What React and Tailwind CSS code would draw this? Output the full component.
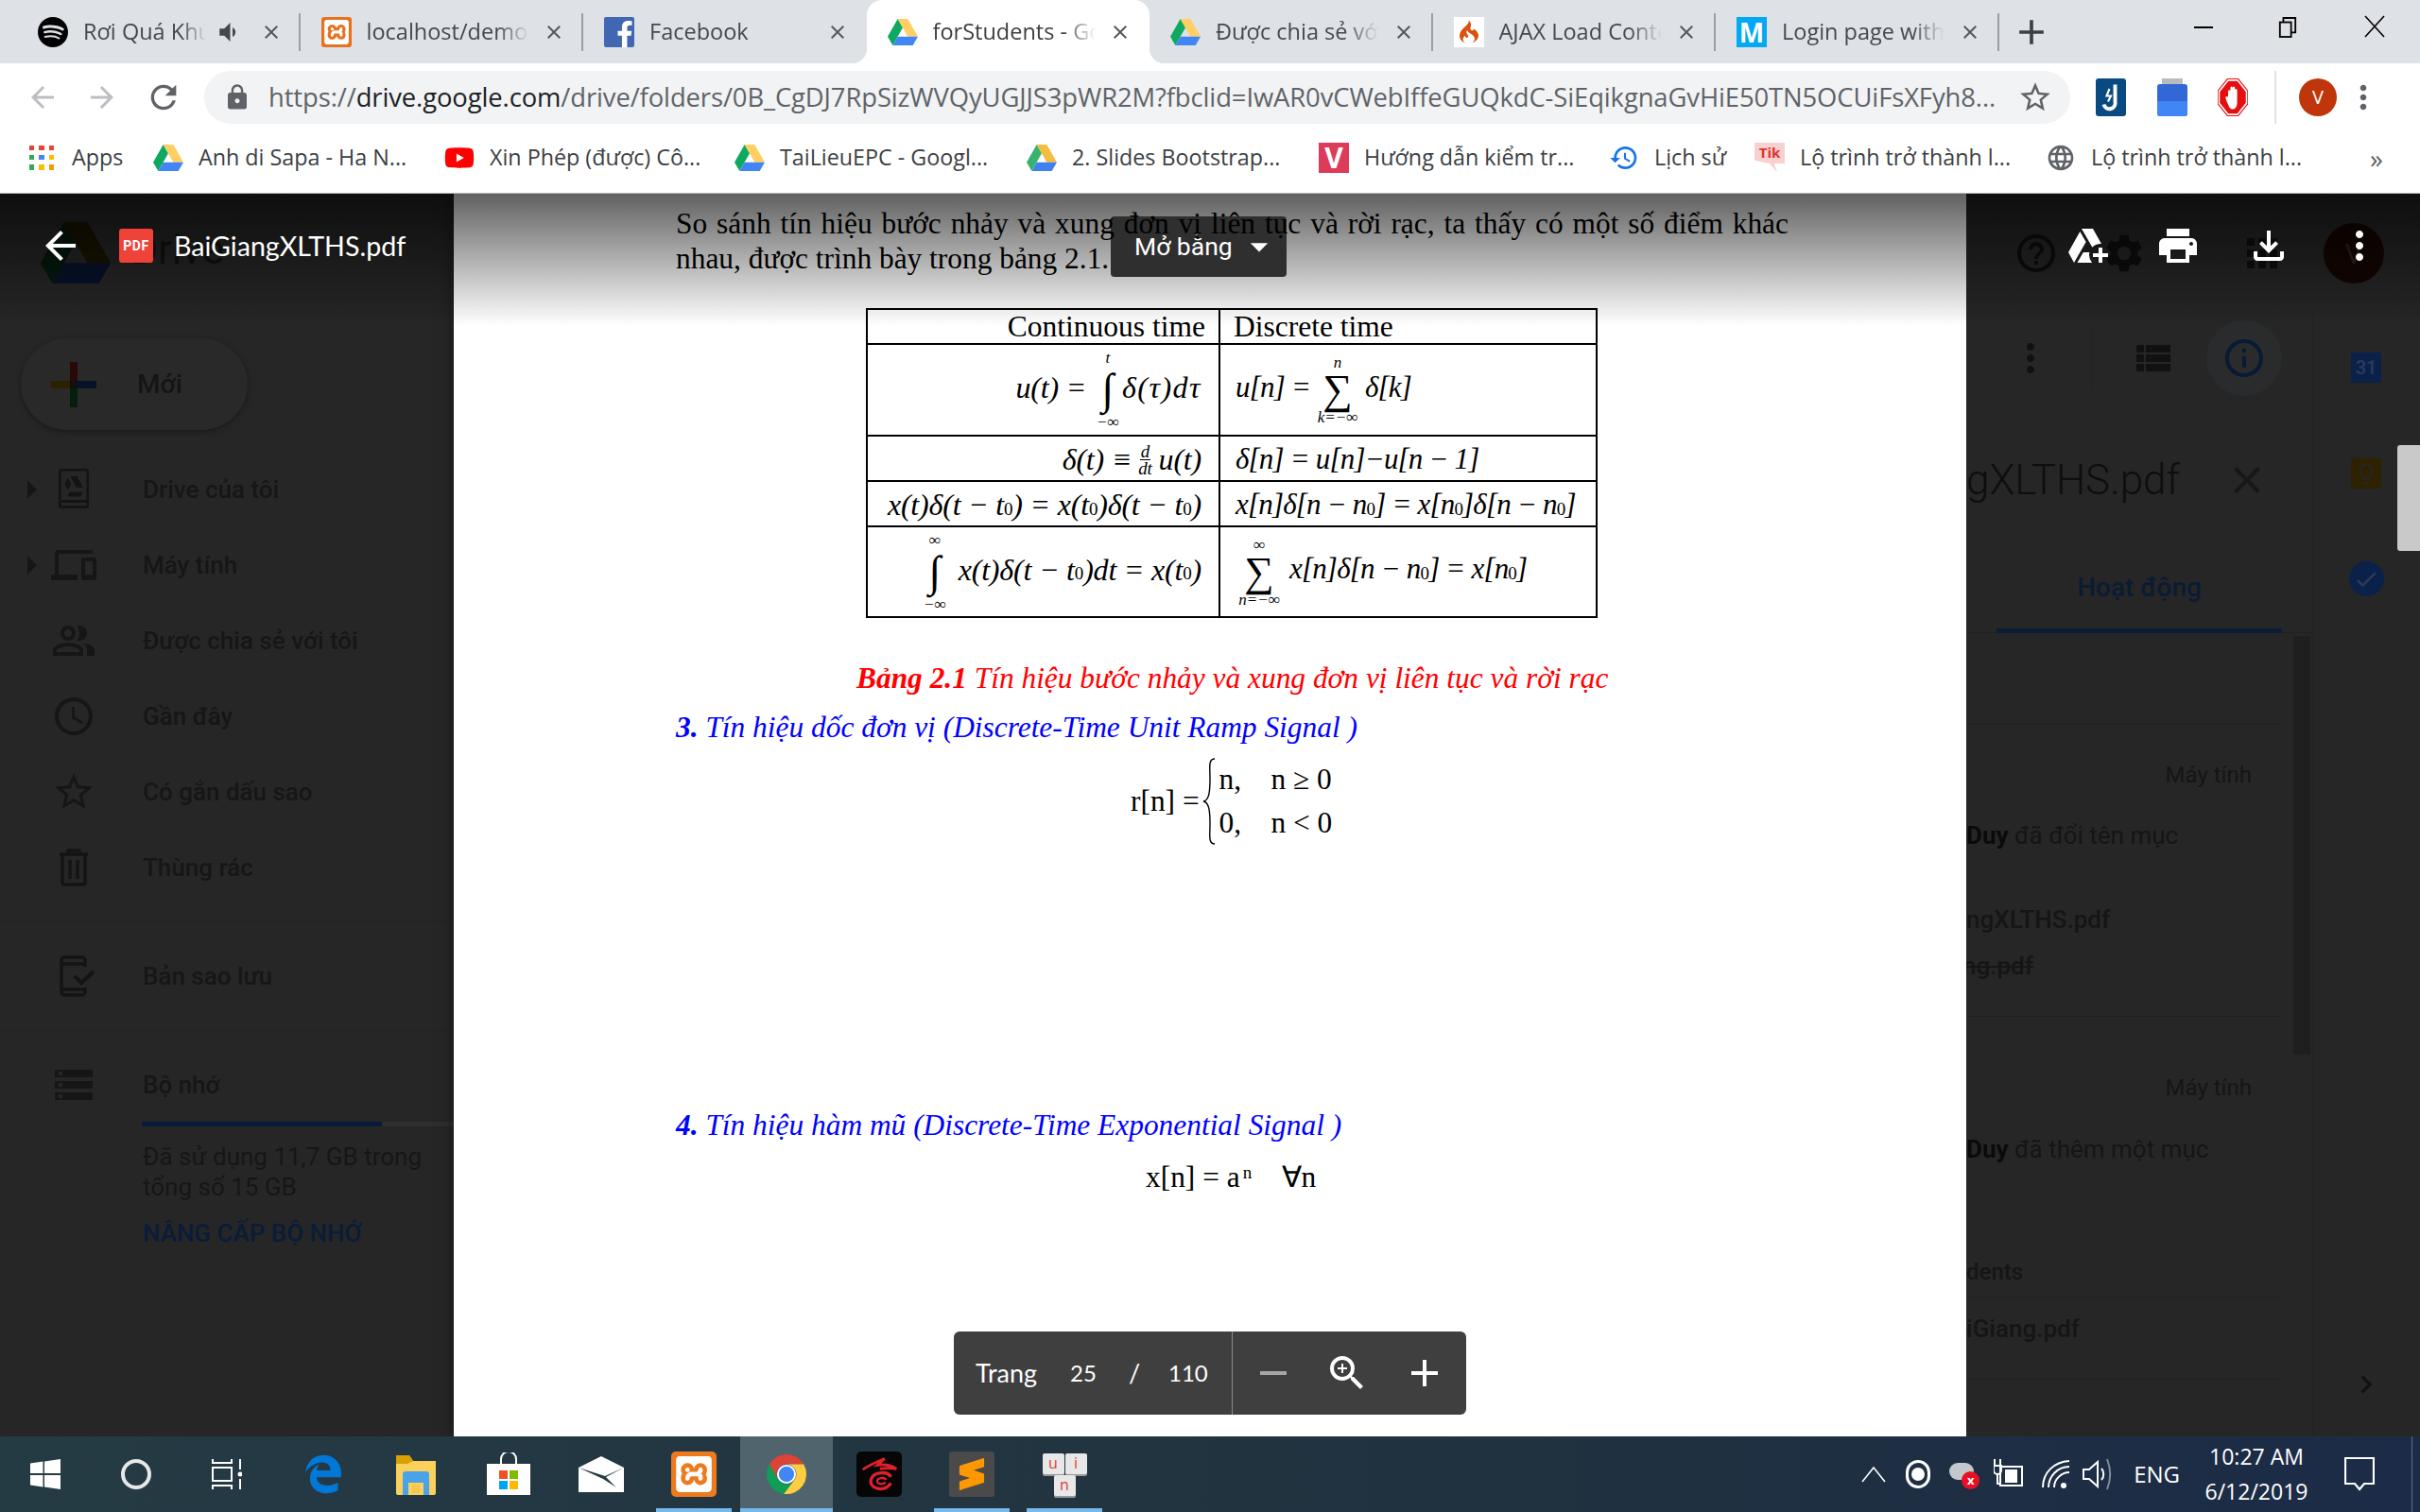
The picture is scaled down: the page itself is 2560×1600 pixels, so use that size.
import {
  MdArrowBack, MdArrowForward, MdRefresh, MdLock, MdStarBorder, MdMoreVert, MdClose, MdAdd, MdRemove,
  MdVolumeDown, MdHelpOutline, MdSettings, MdApps, MdPrint, MdOutlineFileDownload, MdOutlineAddToDrive,
  MdArrowRight, MdOutlinePeopleAlt, MdAccessTime, MdStorage,
  MdViewList, MdInfoOutline, MdLightbulbOutline, MdChevronRight, MdZoomIn, MdArrowDropDown, MdHistory,
  MdDevices, MdCheck, MdLanguage,
} from 'react-icons/md'
import { FaFacebookF, FaYoutube } from 'react-icons/fa'
import { FaEdgeLegacy } from 'react-icons/fa6'
import { SiSpotify, SiXampp, SiCodeigniter, SiSublimetext } from 'react-icons/si'

const SERIF = "font-['Liberation_Serif',serif]"
const ROBOTO = "font-['Roboto',sans-serif]"

function DriveLogo({ className, a = '#0da960', b = '#ffcf63', c = '#4285f4' }) {
  return (
    <svg viewBox="0 0 24 21" className={className}>
      <path d="M8 0 0 14l4 7 8-14z" fill={a} />
      <path d="M8 0h8l8 14h-8z" fill={b} />
      <path d="M4 21h16l4-7H8z" fill={c} />
    </svg>
  )
}

function ChromeLogo({ className }) {
  return (
    <svg viewBox="0 0 48 48" className={className}>
      <path d="M24 13H43A22 22 0 0 0 5 13L14.500 29.500A11 11 0 0 1 24 13Z" fill="#db4437" />
      <path d="M14.500 29.500 5 13A22 22 0 0 0 21 45.800L33.500 29.500A11 11 0 0 1 14.500 29.500Z" fill="#0f9d58" />
      <path d="M24 13H43A22 22 0 0 1 21 45.800L33.500 29.500A11 11 0 0 0 24 13Z" fill="#ffcd40" />
      <circle cx="24" cy="24" r="10.500" fill="#fff" />
      <circle cx="24" cy="24" r="8.500" fill="#4285f4" />
    </svg>
  )
}

function Favicon({ kind }) {
  if (kind === 'spotify') return <SiSpotify className="w-[32px] h-[32px] text-black" />
  if (kind === 'xampp')
    return (
      <span className="w-[32px] h-[32px] rounded-[3px] bg-[#e8701e] flex items-center justify-center">
        <SiXampp className="w-[26px] h-[26px] text-white" />
      </span>
    )
  if (kind === 'facebook')
    return (
      <span className="w-[32px] h-[32px] rounded-[2px] bg-[#4267b2] flex items-end justify-end overflow-hidden">
        <FaFacebookF className="w-[26px] h-[28px] text-white -mr-[3px]" />
      </span>
    )
  if (kind === 'drive') return <DriveLogo className="w-[32px] h-[28px]" />
  if (kind === 'ci')
    return (
      <span className="w-[32px] h-[32px] bg-white flex items-center justify-center">
        <SiCodeigniter className="w-[24px] h-[27px] text-[#d9500f]" />
      </span>
    )
  return (
    <span className="w-[32px] h-[32px] bg-[#03a9f4] flex items-center justify-center text-white text-[28px] font-bold leading-none">M</span>
  )
}

const TABS = [
  { icon: 'spotify', title: 'Rơi Quá Khứ', titleW: 'w-[130px]', audio: true },
  { icon: 'xampp', title: 'localhost/demo/' },
  { icon: 'facebook', title: 'Facebook' },
  { icon: 'drive', title: 'forStudents - Google Drive', active: true },
  { icon: 'drive', title: 'Được chia sẻ với tôi' },
  { icon: 'ci', title: 'AJAX Load Content' },
  { icon: 'm', title: 'Login page with' },
]

function Tab({ tab, divider }) {
  return (
    <div className={`relative w-[299.5px] h-[67px] flex items-center pl-[22px] pr-[21px] text-[23.5px] ${tab.active ? 'bg-white rounded-t-[16px] text-[#3c4043] z-10' : 'text-[#45484c]'}`}>
      {tab.active && <span className="absolute -left-[16px] bottom-0 w-[16px] h-[16px] bg-[radial-gradient(circle_at_0_0,transparent_16px,#fff_16.5px)]" />}
      {tab.active && <span className="absolute -right-[16px] bottom-0 w-[16px] h-[16px] bg-[radial-gradient(circle_at_100%_0,transparent_16px,#fff_16.5px)]" />}
      <Favicon kind={tab.icon} />
      <div className={`ml-[16px] overflow-hidden whitespace-nowrap [mask-image:linear-gradient(90deg,#000_80%,transparent)] ${tab.titleW || 'w-[172px]'}`}>{tab.title}</div>
      {tab.audio && <MdVolumeDown className="ml-[8px] w-[30px] h-[30px] text-[#45484c]" />}
      <MdClose className="ml-auto w-[24px] h-[24px] -mr-[2px] text-[#55585c]" />
      {divider && <span className="absolute right-0 top-[14px] w-[2px] h-[40px] bg-[#9aa0a6]" />}
    </div>
  )
}

function TabStrip() {
  return (
    <div className="h-[67px] bg-[#dee1e6] flex pl-[18px] text-[#3c4043]">
      {TABS.map((t, i) => (
        <Tab key={i} tab={t} divider={i !== 2 && i !== 3} />
      ))}
      <MdAdd className="ml-[12px] mt-[12px] w-[44px] h-[44px] text-[#3c4043]" />
      <div className="ml-[150px] flex items-start pt-[8px] text-black">
        <span className="w-[20px] h-[2px] bg-black mt-[20px]" />
        <svg viewBox="0 0 22 24" className="ml-[69px] mt-[10px] w-[20px] h-[22px]" fill="none" stroke="#000" strokeWidth="2">
          <rect x="2" y="6" width="13" height="17" />
          <path d="M6 6V1h14v17h-5" />
        </svg>
        <svg viewBox="0 0 24 24" className="ml-[70px] mt-[8px] w-[24px] h-[24px]" fill="none" stroke="#000" strokeWidth="1.6">
          <path d="M2 1l20 22M22 1 2 23" />
        </svg>
      </div>
    </div>
  )
}

function Toolbar() {
  return (
    <div className="h-[70px] bg-white flex items-center pt-[2px] text-[#5f6368]">
      <MdArrowBack className="ml-[27px] w-[36px] h-[36px] text-[#bcbec1]" />
      <MdArrowForward className="ml-[27px] w-[36px] h-[36px] text-[#bcbec1]" />
      <MdRefresh className="ml-[27px] w-[40px] h-[40px] text-[#5f6368]" />
      <div className="ml-[23px] w-[1974px] h-[56px] rounded-full bg-[#f1f3f4] flex items-center">
        <MdLock className="ml-[20px] w-[30px] h-[30px] text-[#5f6368]" />
        <div className="ml-[18px] text-[27.4px] whitespace-nowrap tracking-[-0.1px]">
          https://<span className="text-[#202124]">drive.google.com</span>/drive/folders/0B_CgDJ7RpSizWVQyUGJJS3pWR2M?fbclid=IwAR0vCWebIffeGUQkdC-SiEqikgnaGvHiE50TN5OCUiFsXFyh8...
        </div>
        <MdStarBorder className="ml-auto mr-[18px] w-[38px] h-[38px] text-[#5f6368] shrink-0" />
      </div>
      <div className="ml-[27px] w-[32px] h-[40px] bg-[#0a4a82] rounded-[3px] flex items-center justify-center">
        <svg viewBox="0 0 16 20" className="w-[24px] h-[32px]" fill="none" stroke="#fff" strokeWidth="2.600">
          <path d="M11 1v12a4 4 0 0 1-8 2" />
          <path d="M7 4 5 9h3l-2 4" strokeWidth="1.400" />
        </svg>
      </div>
      <div className="ml-[33px] w-[32px] h-[40px] relative">
        <span className="absolute left-[5px] top-0 w-[22px] h-[7px] bg-[#b8bcc0]" />
        <span className="absolute left-0 top-[6px] w-[32px] h-[34px] rounded-[3px] bg-[#3367d6]" />
        <span className="absolute left-0 top-[24px] w-[32px] h-[16px] rounded-b-[3px] bg-[#4285f4]" />
      </div>
      <svg viewBox="0 0 32 32" className="ml-[32px] w-[32px] h-[40px]" preserveAspectRatio="none">
        <path d="M10 0h12l10 10v12L22 32H10L0 22V10z" fill="#e60f0f" />
        <path d="M11 1.500h10l9.500 9.500v10L21 30.500H11L1.500 21V11z" fill="none" stroke="#fff" strokeWidth="1.500" />
        <path d="M11 21V11a1.200 1.200 0 0 1 2.400 0v4V8a1.200 1.200 0 0 1 2.400 0v7V8a1.200 1.200 0 0 1 2.400 0v7-5a1.200 1.200 0 0 1 2.400 0v10c0 4-2 6-4.700 6-3 0-4-2-6-6l-1.500-3c-.6-1.500 1.500-2.500 2.600-1z" fill="#fff" />
      </svg>
      <span className="ml-[28px] w-[2px] h-[56px] bg-[#dfe1e5]" />
      <div className="ml-[24px] w-[40px] h-[40px] rounded-full bg-[#bf360c] flex items-center justify-center text-white text-[20px]">V</div>
      <MdMoreVert className="ml-[8px] w-[40px] h-[40px] text-[#5f6368]" />
    </div>
  )
}

const BOOKMARKS = [
  { w: 'w-[134px]', label: 'Apps', icon: 'apps' },
  { w: 'w-[308px]', label: 'Anh di Sapa - Ha N...', icon: 'drive' },
  { w: 'w-[307px]', label: 'Xin Phép (được) Cô...', icon: 'yt' },
  { w: 'w-[309px]', label: 'TaiLieuEPC - Googl...', icon: 'drive' },
  { w: 'w-[309px]', label: '2. Slides Bootstrap...', icon: 'drive2' },
  { w: 'w-[307px]', label: 'Hướng dẫn kiểm tr...', icon: 'v' },
  { w: 'w-[154px]', label: 'Lịch sử', icon: 'hist' },
  { w: 'w-[308px]', label: 'Lộ trình trở thành l...', icon: 'tik' },
  { w: 'w-[308px]', label: 'Lộ trình trở thành l...', icon: 'globe' },
]

const APP_DOTS = ['#ea4335', '#ea4335', '#ea4335', '#34a853', '#4285f4', '#fbbc05', '#34a853', '#fbbc05', '#ef9b00']

function BookmarkIcon({ kind }) {
  if (kind === 'apps')
    return (
      <span className="w-[32px] h-[32px] grid grid-cols-3 gap-[5px] p-[3px]">
        {APP_DOTS.map((c, i) => (
          <i key={i} className="block" style={{ backgroundColor: c }} />
        ))}
      </span>
    )
  if (kind === 'drive') return <DriveLogo className="w-[32px] h-[28px]" />
  if (kind === 'drive2') return <DriveLogo className="w-[32px] h-[28px]" a="#37b36f" b="#f3bd42" c="#3f81ee" />
  if (kind === 'yt') return <FaYoutube className="w-[32px] h-[32px] text-[#f00]" />
  if (kind === 'v')
    return (
      <span className="w-[32px] h-[32px] bg-[#dc3b5a] flex items-center justify-center text-white text-[30px] font-bold leading-none">V</span>
    )
  if (kind === 'hist') return <MdHistory className="w-[34px] h-[34px] text-[#1a73e8]" />
  if (kind === 'tik')
    return (
      <span className="w-[32px] h-[32px] flex items-start justify-center bg-[#f8d0cf] text-[#d9342b] text-[15px] font-bold leading-[20px] [clip-path:polygon(0_0,100%_0,100%_70%,65%_70%,75%_100%,50%_70%,0_60%)]">Tik</span>
    )
  return <MdLanguage className="w-[34px] h-[34px] text-[#5f6368]" />
}

function BookmarkBar() {
  return (
    <div className="h-[68px] bg-white flex items-center pl-[28px] pb-[8px] border-b border-[#b4b4b4] text-[23.3px] text-[#3c4043]">
      {BOOKMARKS.map((b, i) => (
        <div key={i} className={`${b.w} flex items-center gap-[16px] whitespace-nowrap`}>
          <span className="w-[32px] h-[32px] flex items-center justify-center shrink-0">
            <BookmarkIcon kind={b.icon} />
          </span>
          {b.label}
        </div>
      ))}
      <span className="ml-[35px] text-[28px] text-[#5f6368]">»</span>
    </div>
  )
}

function BlackDrive() {
  return (
    <svg viewBox="0 0 24 24" className="w-[48px] h-[48px]" fill="#141414">
      <path fillRule="evenodd" d="M4 2.500A1.500 1.500 0 0 1 5.500 1h13A1.500 1.500 0 0 1 20 2.500v18a1.500 1.500 0 0 1-1.500 1.500h-13A1.500 1.500 0 0 1 4 20.500zM5.300 2.300v15.200h13.400V2.300zM5.300 19v1.600h13.400V19zM10.200 5h3.600l3.200 6h-3.500zM8.900 5.800l1.800 3.200-1.700 3.400-1.900-3.100zM10 13.300h7l-1.400 2.500H8.500z" />
    </svg>
  )
}

function TrashIcon() {
  return (
    <svg viewBox="0 0 48 48" className="w-[48px] h-[48px]" fill="none" stroke="#141414" strokeWidth="3.500">
      <path d="M9 10h30M18 9V6h12v3M12 11v29a2 2 0 0 0 2 2h20a2 2 0 0 0 2-2V11" />
      <path d="M20 16v20M28 16v20" />
    </svg>
  )
}

function BackupIcon() {
  return (
    <svg viewBox="0 0 48 48" className="w-[48px] h-[48px]" fill="none" stroke="#141414" strokeWidth="3.500">
      <path d="M36 14V7a3 3 0 0 0-3-3H14a3 3 0 0 0-3 3v34a3 3 0 0 0 3 3h19a3 3 0 0 0 3-3v-5M11 11h25M11 38h25" />
      <path d="M25 24l7 7 13-12" strokeWidth="4" />
    </svg>
  )
}

const NAV = [
  { label: 'Drive của tôi', icon: <BlackDrive />, arrow: true },
  { label: 'Máy tính', icon: <MdDevices className="w-[48px] h-[48px]" />, arrow: true },
  { label: 'Được chia sẻ với tôi', icon: <MdOutlinePeopleAlt className="w-[48px] h-[48px]" /> },
  { label: 'Gần đây', icon: <MdAccessTime className="w-[48px] h-[48px]" /> },
  { label: 'Có gắn dấu sao', icon: <MdStarBorder className="w-[48px] h-[48px]" /> },
  { label: 'Thùng rác', icon: <TrashIcon /> },
]

function NavRow({ item }) {
  return (
    <div className="h-[80px] flex items-center pl-[9px] text-[#161616]">
      <span className="w-[48px] h-[48px] shrink-0">{item.arrow && <MdArrowRight className="w-[48px] h-[48px]" />}</span>
      <span className="w-[48px] h-[48px] -ml-[3px] shrink-0">{item.icon}</span>
      <span className="ml-[49px] text-[26px] font-medium whitespace-nowrap">{item.label}</span>
    </div>
  )
}

function Sidebar() {
  return (
    <aside className={`w-[480px] shrink-0 bg-[#262626] flex flex-col ${ROBOTO}`}>
      <div className="h-[127px] shrink-0 border-b border-[#232323] flex items-center pl-[42px] pb-[28px]">
        <DriveLogo className="w-[76px] h-[65px] mt-[26px]" a="#031a0c" b="#191300" c="#07122a" />
        <span className="ml-[20px] mt-[20px] text-[44px] text-[#111]">Drive</span>
      </div>
      <button className="mt-[26px] ml-[22px] w-[240px] h-[97px] rounded-full bg-[#292929] shadow-[0_2px_6px_rgba(0,0,0,0.35)] flex items-center shrink-0">
        <svg viewBox="0 0 48 48" className="ml-[32px] w-[48px] h-[48px]">
          <rect x="20" y="0" width="8" height="20" fill="#2b0808" />
          <rect x="0" y="20" width="20" height="8" fill="#2b2000" />
          <rect x="28" y="20" width="20" height="8" fill="#07122a" />
          <rect x="20" y="28" width="8" height="20" fill="#051f0c" />
          <rect x="20" y="20" width="8" height="8" fill="#101010" />
        </svg>
        <span className="ml-[43px] text-[28px] font-medium text-[#151515]">Mới</span>
      </button>
      <div className="mt-[23px]">
        {NAV.map((n) => (
          <NavRow key={n.label} item={n} />
        ))}
      </div>
      <div className="mt-[17px] border-t border-[#232323]" />
      <div className="mt-[17px]">
        <NavRow item={{ label: 'Bản sao lưu', icon: <BackupIcon /> }} />
      </div>
      <div className="mt-[17px] border-t border-[#232323]" />
      <div className="mt-[17px]">
        <NavRow item={{ label: 'Bộ nhớ', icon: <MdStorage className="w-[48px] h-[48px]" /> }} />
      </div>
      <div className="ml-[150px] -mt-[1px] h-[5px] bg-[#2e2e2e]">
        <div className="h-[5px] w-[254px] bg-[#0a1a3a]" />
      </div>
      <div className="ml-[151px] mt-[16px] text-[26px] leading-[32px] text-[#161616]">
        Đã sử dụng 11,7 GB trong
        <br />
        tổng số 15 GB
      </div>
      <div className="ml-[151px] mt-[14px] text-[26px] font-medium text-[#0a1c38] whitespace-nowrap">NÂNG CẤP BỘ NHỚ</div>
    </aside>
  )
}

function Limits({ top, bottom, symbol, w = 'w-[34px]', big = false }) {
  return (
    <span className={`inline-flex flex-col items-center tracking-normal translate-y-[3px] ${w}`}>
      <span className="h-[16px] text-[17px] leading-[16px]">{top}</span>
      <span className={`not-italic ${big ? 'h-[52px] leading-[50px] text-[46px]' : 'h-[42px] leading-[42px] text-[44px]'}`}>{symbol}</span>
      <span className="h-[16px] text-[17px] leading-[16px] whitespace-nowrap">{bottom}</span>
    </span>
  )
}

const Sub0 = () => <sub className="text-[19px] not-italic">0</sub>

function MathTable() {
  const left = 'border-r-2 border-black flex items-center justify-end pr-[18px] pb-[5px] text-[32px] tracking-[-0.2px] whitespace-pre'
  const right = 'flex items-center pl-[16px] pb-[5px] text-[31px] tracking-[-0.8px] whitespace-pre'
  return (
    <div className={`ml-[436px] w-[774px] border-2 border-black ${SERIF}`}>
      <div className="grid grid-cols-[373px_1fr] h-[35px] text-[31.5px] leading-[35px]">
        <div className="border-r-2 border-black flex items-center justify-end pr-[14px]">Continuous time</div>
        <div className="flex items-center pl-[14px]">Discrete time</div>
      </div>
      <div className="grid grid-cols-[373px_1fr] h-[97px] border-t-2 border-black italic">
        <div className={left}>
          u(t) = <Limits top="t" bottom="−∞" symbol="∫" big w="w-[30px]" /> <span className="tracking-[1.5px]">δ(τ)dτ</span>
        </div>
        <div className={right}>
          u[n] = <Limits top="n" bottom="k=−∞" symbol="∑" w="w-[44px]" /> δ[k]
        </div>
      </div>
      <div className="grid grid-cols-[373px_1fr] h-[48px] border-t-2 border-black italic">
        <div className={left}>
          δ(t) ≡
          <span className="inline-flex flex-col items-center mx-[7px] text-[19px] leading-[17px]">
            <span className="border-b border-black px-[1px]">d</span>
            <span>dt</span>
          </span>
          u(t)
        </div>
        <div className={right}>δ[n] = u[n]−u[n − 1]</div>
      </div>
      <div className="grid grid-cols-[373px_1fr] h-[48px] border-t-2 border-black italic">
        <div className={left}>
          x(t)δ(t − t<Sub0 />) = x(t<Sub0 />)δ(t − t<Sub0 />)
        </div>
        <div className={right}>
          x[n]δ[n − n<Sub0 />] = x[n<Sub0 />]δ[n − n<Sub0 />]
        </div>
      </div>
      <div className="grid grid-cols-[373px_1fr] h-[96px] border-t-2 border-black italic">
        <div className={left}>
          <Limits top="∞" bottom="−∞" symbol="∫" big /> x(t)δ(t − t<Sub0 />)dt = x(t<Sub0 />)
        </div>
        <div className={right}>
          <Limits top="∞" bottom="n=−∞" symbol="∑" w="w-[50px]" /> x[n]δ[n − n<Sub0 />] = x[n<Sub0 />]
        </div>
      </div>
    </div>
  )
}

function PageControls() {
  return (
    <div className="absolute left-[529px] bottom-[23px] w-[542px] h-[88px] rounded-[6px] bg-[#3f3f3f] flex items-center text-white text-[27px] font-['Lato',sans-serif]">
      <div className="w-[294px] shrink-0 pl-[23px] flex items-center">
        <span className="w-[100px]">Trang</span>
        <span className="w-[62px] text-[24px]">25</span>
        <span className="w-[42px]">/</span>
        <span className="text-[24px]">110</span>
      </div>
      <span className="w-[1px] h-[88px] bg-[#8a8a8a]" />
      <MdRemove className="ml-[19px] w-[48px] h-[48px] text-[#a6a6a6]" />
      <MdZoomIn className="ml-[30px] w-[48px] h-[48px]" />
      <MdAdd className="ml-[34px] w-[48px] h-[48px]" />
    </div>
  )
}

function PdfPage() {
  return (
    <main className={`relative w-[1600px] shrink-0 bg-white text-black pt-[13px] shadow-[0_0_14px_rgba(0,0,0,0.5)] ${SERIF}`}>
      <div className="relative z-30 pl-[235px] w-[1412px] text-[31.4px] leading-[37px]">
        <p className="text-justify [text-align-last:justify]">So sánh tín hiệu bước nhảy và xung đơn vị liên tục và rời rạc, ta thấy có một số điểm khác</p>
        <p>nhau, được trình bày trong bảng 2.1.</p>
      </div>
      <div className="mt-[34px]">
        <MathTable />
      </div>
      <p className="mt-[45px] ml-[426px] text-[31.4px] leading-[37px] italic text-[#f00] whitespace-nowrap">
        <b>Bảng 2.1</b> Tín hiệu bước nhảy và xung đơn vị liên tục và rời rạc
      </p>
      <p className="mt-[15px] ml-[235px] text-[31.4px] leading-[37px] italic text-[#00f] whitespace-nowrap">
        <b>3.</b> Tín hiệu dốc đơn vị (Discrete-Time Unit Ramp Signal )
      </p>
      <div className="mt-[14px] ml-[716px] h-[92px] flex items-center text-[31.4px] leading-[46px]">
        <span className="whitespace-pre">r[n] = </span>
        <svg viewBox="0 0 14 92" className="-ml-[4px] w-[14px] h-[92px]" fill="none" stroke="#000" strokeWidth="1.400">
          <path d="M13 1C6 1 8 10 8 22c0 14-1 23-7 24 6 1 7 10 7 24 0 12-2 21 5 21" />
        </svg>
        <div className="ml-[3px] grid grid-cols-[55px_auto] whitespace-pre">
          <span>n,</span>
          <span>n ≥ 0</span>
          <span>0,</span>
          <span>n &lt; 0</span>
        </div>
      </div>
      <p className="mt-[278px] ml-[235px] text-[31.4px] leading-[37px] italic text-[#00f] whitespace-nowrap">
        <b>4.</b> Tín hiệu hàm mũ (Discrete-Time Exponential Signal )
      </p>
      <p className="mt-[18px] ml-[732px] text-[31.4px] leading-[37px] whitespace-pre">
        x[n] = a<sup className="text-[19px] ml-[3px]">n</sup>    ∀n
      </p>
      <div className={`absolute left-[695px] top-[24px] w-[186px] h-[64px] z-20 rounded-[4px] bg-[#2f2f2f] flex items-center text-white text-[26.5px] ${ROBOTO}`}>
        <span className="ml-[25px]">Mở bằng</span>
        <MdArrowDropDown className="ml-[6px] w-[44px] h-[44px]" />
      </div>
      <PageControls />
    </main>
  )
}

function Activity({ children, className = '' }) {
  return <div className={`leading-[32px] text-[#151515] whitespace-nowrap ${className}`}>{children}</div>
}

function DetailsPanel() {
  return (
    <aside className={`relative w-[480px] shrink-0 bg-[#262626] flex flex-col overflow-hidden ${ROBOTO}`}>
      <div className="h-[127px] shrink-0 border-b border-[#232323] flex items-center text-[#0d0d0d]">
        <MdHelpOutline className="ml-[50px] w-[48px] h-[48px] shrink-0" />
        <MdSettings className="ml-[45px] w-[48px] h-[48px] shrink-0" />
        <MdApps className="ml-[98px] w-[48px] h-[48px] shrink-0" />
        <span className="ml-[41px] w-[64px] h-[64px] rounded-full bg-[#140502] flex items-center justify-center text-[#2d2320] text-[30px] shrink-0">V</span>
      </div>
      <div className="flex flex-1 min-h-0">
        <div className="relative w-[367px] shrink-0 border-r border-[#222]">
          <div className="h-[95px] border-b border-[#232323] flex items-center text-[#111]">
            <MdMoreVert className="ml-[44px] w-[48px] h-[48px] shrink-0" />
            <span className="ml-[41px] w-px h-[64px] bg-[#222]" />
            <MdViewList className="ml-[40px] w-[48px] h-[48px] shrink-0" />
            <span className="ml-[32px] w-[80px] h-[80px] rounded-full bg-[#2a2b2c] flex items-center justify-center shrink-0">
              <MdInfoOutline className="w-[48px] h-[48px] text-[#081a36]" />
            </span>
          </div>
          <div className="h-[162px] flex items-center">
            <span className="text-[44px] font-light text-[#0e0e0e]">gXLTHS.pdf</span>
            <MdClose className="ml-[47px] w-[48px] h-[48px] text-[#171717]" />
          </div>
          <div className="h-[81px] border-b border-[#202020] pl-[32px]">
            <div className="w-[302px] h-[81px] pb-[10px] border-b-[5px] border-[#0a1c38] flex items-center justify-center text-[28px] text-[#0b1b33] font-medium">Hoạt động</div>
          </div>
          <div className="absolute left-[346px] top-[341px] w-[18px] h-[443px] bg-[#1f1f1f]" />
          <div className="w-[334px] text-[26px]">
            <div className="h-[97px] border-b border-[#202020]" />
            <Activity className="mt-[37px] text-[24px] text-right pr-[32px]">Máy tính</Activity>
            <Activity className="mt-[32px]"><b className="text-[#0a0a0a]">Duy</b> đã đổi tên mục</Activity>
            <Activity className="mt-[57px] font-medium">ngXLTHS.pdf</Activity>
            <Activity className="mt-[17px] font-medium text-[#1b1b1b] line-through -ml-[4px]">ng.pdf</Activity>
            <div className="mt-[37px] border-b border-[#202020]" />
            <Activity className="mt-[59px] text-[24px] text-right pr-[32px]">Máy tính</Activity>
            <Activity className="mt-[33px]"><b className="text-[#0a0a0a]">Duy</b> đã thêm một mục</Activity>
            <Activity className="mt-[98px] text-[24px] font-medium">dents</Activity>
            <div className="mt-[11px] border-b border-[#222]" />
            <Activity className="mt-[16px] font-medium">iGiang.pdf</Activity>
            <div className="mt-[37px] border-b border-[#202020]" />
          </div>
        </div>
        <div className="w-[112px] flex flex-col items-center">
          <div className="mt-[41px] w-[32px] h-[32px] rounded-[2px] bg-[#0a214a] flex items-center justify-center text-[#2d3a55] text-[20px] font-medium">31</div>
          <div className="mt-[80px] w-[32px] h-[32px] rounded-[2px] bg-[#2e2100] flex items-center justify-center">
            <MdLightbulbOutline className="w-[26px] h-[26px] text-[#262626]" />
          </div>
          <div className="mt-[77px] w-[37px] h-[37px] rounded-full bg-[#0a214a] flex items-center justify-center">
            <MdCheck className="w-[28px] h-[28px] text-[#2d3a55]" />
          </div>
          <MdChevronRight className="mt-auto mb-[36px] w-[38px] h-[38px] text-[#111]" />
        </div>
      </div>
      <div className="absolute right-0 top-[266px] w-[24px] h-[112px] rounded-l-[3px] bg-[#c9c9c9]" />
    </aside>
  )
}

// viewer header that sits over the dimmed drive page
function ViewerHeader() {
  return (
    <div className="absolute inset-x-0 top-0 h-[140px] bg-[linear-gradient(rgba(0,0,0,0.62),rgba(0,0,0,0))] pointer-events-none z-10">
      <div className="h-[110px] flex items-center text-white">
        <MdArrowBack className="ml-[40px] w-[48px] h-[48px]" />
        <span className="ml-[38px] w-[36px] h-[36px] rounded-[3px] bg-[#ef4238] flex items-center justify-center text-[14px] font-bold font-['Roboto',sans-serif] tracking-[0.5px]">PDF</span>
        <span className="ml-[22px] text-[28.6px] font-['Lato',sans-serif]">BaiGiangXLTHS.pdf</span>
        <div className="ml-auto flex pr-[16px]">
          <span className="w-[96px] flex justify-center"><MdOutlineAddToDrive className="w-[48px] h-[48px]" /></span>
          <span className="w-[96px] flex justify-center"><MdPrint className="w-[48px] h-[48px]" /></span>
          <span className="w-[96px] flex justify-center"><MdOutlineFileDownload className="w-[48px] h-[48px]" /></span>
          <span className="w-[96px] flex justify-center"><MdMoreVert className="w-[48px] h-[48px]" /></span>
        </div>
      </div>
    </div>
  )
}

function WinLogo() {
  return (
    <svg viewBox="0 0 32 32" className="w-[32px] h-[32px]" fill="#fff">
      <path d="M0 4.500 13.500 2.600V15H0zM15 2.400 32 0v15H15zM0 17h13.500v12.400L0 27.500zM15 17h17v15l-17-2.400z" />
    </svg>
  )
}

function FolderIcon() {
  return (
    <svg viewBox="0 0 42 44" className="w-[42px] h-[44px]">
      <path d="M0 2h14l4 6h24v34a2 2 0 0 1-2 2H2a2 2 0 0 1-2-2z" fill="#fbd15b" />
      <path d="M0 2h14l4 6-6 3H0z" fill="#d9a100" />
      <path d="M7 44V22a3 3 0 0 1 3-3h22a3 3 0 0 1 3 3v22h-6V31H13v13z" fill="#4aa3e8" />
      <rect x="17" y="33" width="8" height="9" fill="#f2c94c" />
    </svg>
  )
}

function StoreIcon() {
  return (
    <svg viewBox="0 0 46 46" className="w-[46px] h-[46px]">
      <path d="M15 12V7a8 8 0 0 1 16 0v5" fill="none" stroke="#fff" strokeWidth="2" />
      <path d="M0 12h46v33H0z" fill="#fff" />
      <rect x="13" y="19" width="9" height="9" fill="#f25022" />
      <rect x="24" y="19" width="9" height="9" fill="#7fba00" />
      <rect x="13" y="30" width="9" height="9" fill="#00a4ef" />
      <rect x="24" y="30" width="9" height="9" fill="#ffb900" />
    </svg>
  )
}

function MailIcon() {
  return (
    <svg viewBox="0 0 48 38" className="w-[48px] h-[38px]">
      <path d="M0 12 24 0l24 12v26H0z" fill="#fff" />
      <path d="M0 12 28 21 48 12 29 22l11 11-14-9z" fill="#243a43" />
    </svg>
  )
}

function GarenaIcon() {
  return (
    <span className="w-[48px] h-[48px] rounded-[5px] bg-[#060606] flex items-center justify-center">
      <svg viewBox="0 0 48 48" className="w-[46px] h-[46px]" fill="none" stroke="#e0202a" strokeWidth="3.500">
        <path d="M6 19c8-6 14-8 24-12l-8 7c7-1 15 0 21 4-7-1-12-1-18 0" strokeWidth="3" />
        <path d="M37 27c-3-6-19-7-22 3-2 10 14 15 22 4" />
        <path d="M32 30c-3-3-9-2-10 1-1 4 6 5 9 2" strokeWidth="2.500" />
      </svg>
    </span>
  )
}

function UniKey() {
  const key = 'w-[23px] h-[22px] rounded-[2px] bg-[#e8e8e8] text-[#e53935] text-[16px] leading-[20px] text-center shadow-[0_2px_0_#999]'
  return (
    <div className="w-[48px] flex flex-col items-center">
      <div className="flex gap-[1px]">
        <span className={key}>u</span>
        <span className={key}>i</span>
      </div>
      <span className={`${key} mt-[1px]`}>n</span>
    </div>
  )
}

const TASK_APPS = [
  { el: <FaEdgeLegacy className="w-[42px] h-[44px] text-[#0078d7]" /> },
  { el: <FolderIcon /> },
  { el: <StoreIcon /> },
  { el: <MailIcon /> },
  {
    el: (
      <span className="w-[48px] h-[48px] rounded-[5px] bg-[#ee7a1e] flex items-center justify-center">
        <SiXampp className="w-[38px] h-[38px] text-white" />
      </span>
    ),
    open: true,
  },
  { el: <ChromeLogo className="w-[46px] h-[46px]" />, open: true, active: true },
  { el: <GarenaIcon /> },
  {
    el: (
      <span className="w-[48px] h-[48px] rounded-[3px] bg-[#4a4a4a] flex items-center justify-center">
        <SiSublimetext className="w-[34px] h-[34px] text-[#ff9800]" />
      </span>
    ),
    open: true,
  },
  { el: <UniKey />, open: true },
]

function Taskbar() {
  return (
    <footer className="h-[80px] shrink-0 bg-[linear-gradient(90deg,#253b44,#20323f_60%,#1c2b47)] flex items-center text-white font-['Open_Sans',sans-serif]">
      <div className="w-[96px] flex justify-center"><WinLogo /></div>
      <div className="w-[96px] flex justify-center">
        <span className="w-[32px] h-[32px] rounded-full border-[4px] border-[#e8e8e8]" />
      </div>
      <div className="w-[96px] flex justify-center">
        <svg viewBox="0 0 32 32" className="w-[32px] h-[32px]" fill="none" stroke="#fff" strokeWidth="2">
          <path d="M1 0v4h20V0M1 32v-4h20v4" />
          <rect x="1" y="9" width="20" height="14" />
          <path d="M30 0v11M30 21v11" />
          <circle cx="30" cy="16" r="2.500" fill="#fff" stroke="none" />
        </svg>
      </div>
      <div className="w-[5px]" />
      {TASK_APPS.map((a, i) => (
        <div key={i} className={`relative w-[98px] h-[80px] flex items-center justify-center ${a.active ? 'bg-[#4f646c]' : ''}`}>
          {a.el}
          {a.open && <span className={`absolute bottom-0 h-[4px] bg-[#76b9ed] ${a.active ? 'inset-x-0' : 'left-[9px] right-[9px]'}`} />}
        </div>
      ))}
      <div className="ml-auto flex items-center">
        <svg viewBox="0 0 26 18" className="w-[26px] h-[18px]" fill="none" stroke="#fff" strokeWidth="1.600"><path d="M1 17 13 2l12 15" /></svg>
        <span className="ml-[21px] w-[26px] h-[30px] rounded-full border-[3px] border-white flex items-center justify-center">
          <span className="w-[14px] h-[14px] rounded-full bg-white" />
        </span>
        <span className="relative ml-[20px] w-[32px] h-[32px]">
          <span className="absolute left-0 top-[4px] w-[26px] h-[18px] rounded-full bg-[#c3c8cc]" />
          <span className="absolute right-0 bottom-0 w-[19px] h-[19px] rounded-full bg-[#e81123] text-[13px] leading-[19px] text-center font-bold">x</span>
        </span>
        <svg viewBox="0 0 32 32" className="ml-[15px] w-[32px] h-[32px]" fill="none" stroke="#fff" strokeWidth="2">
          <rect x="7" y="8" width="23" height="20" />
          <rect x="13" y="12" width="11" height="12" fill="#fff" />
          <path d="M1 0v7M7 0v7M0 7h8v5a4 4 0 0 1-8 0zM4 16v10h3" />
        </svg>
        <svg viewBox="0 0 32 32" className="ml-[18px] w-[32px] h-[34px]" fill="none" stroke="#fff" strokeWidth="2">
          <path d="M2 30C2 14 14 3 30 2M8 30C8 18 18 8 30 8M14 30c0-9 8-16 16-16" />
          <circle cx="24" cy="28" r="3" fill="#fff" stroke="none" />
        </svg>
        <svg viewBox="0 0 32 40" className="ml-[12px] w-[32px] h-[40px]" fill="none" stroke="#fff" strokeWidth="2">
          <path d="M1 15h6l9-8v26l-9-8H1zM20 14c3 3 3 9 0 12" />
          <path d="M26 4c4 10 4 22 0 32" stroke="#7f8ea0" />
        </svg>
        <span className="ml-[22px] text-[24px]">ENG</span>
        <div className="ml-[25px] w-[112px] flex flex-col items-center text-[23px] leading-[37px] whitespace-nowrap">
          <span>10:27 AM</span>
          <span>6/12/2019</span>
        </div>
        <svg viewBox="0 0 32 36" className="ml-[37px] w-[32px] h-[36px]" fill="none" stroke="#fff" strokeWidth="2.200"><path d="M1 1h30v27H21l-5 6-5-6H1z" /></svg>
        <span className="ml-[39px] w-px h-[80px] bg-[#5e6f80]" />
        <span className="w-[8px]" />
      </div>
    </footer>
  )
}

export default function App() {
  return (
    <div className="w-[2560px] h-[1600px] overflow-hidden flex flex-col font-['Open_Sans',sans-serif] bg-[#262626]">
      <header className="shrink-0">
        <TabStrip />
        <Toolbar />
        <BookmarkBar />
      </header>
      <div className="relative flex flex-1 min-h-0 overflow-hidden">
        <Sidebar />
        <PdfPage />
        <DetailsPanel />
        <ViewerHeader />
      </div>
      <Taskbar />
    </div>
  )
}
